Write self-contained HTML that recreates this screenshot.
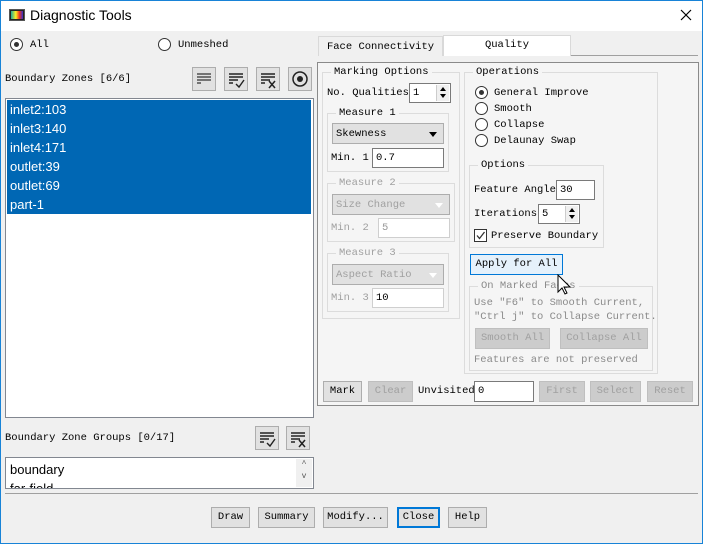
<!DOCTYPE html>
<html><head><meta charset="utf-8"><style>
*{box-sizing:border-box;margin:0;padding:0}
body{width:703px;height:544px;overflow:hidden;background:#fff;font-family:"Liberation Mono",monospace;font-size:10.5px;color:#000;position:relative}
.a{position:absolute;white-space:nowrap;line-height:16px}
.win{position:absolute;left:0;top:0;width:703px;height:544px;border:1px solid #1883d7}
.body{position:absolute;left:1px;top:31px;width:701px;height:512px;background:#f0f0f0}
.btn{position:absolute;border:1px solid #adadad;background:#e1e1e1;text-align:center;line-height:19px;font-size:10.5px}
.dis{color:#a0a0a0;background:#cccccc;border-color:#bfbfbf}
.inp{position:absolute;background:#fff;border:1px solid #7a7a7a;padding-left:3px;line-height:19px;font-size:10.5px}
.inpd{border-color:#cfcfcf;color:#999}
.grp{position:absolute;border:1px solid #dcdcdc}
.gl{position:absolute;top:-8px;left:8px;background:#f5f5f5;padding:0 3px;line-height:14px}
.rad{position:absolute;width:13px;height:13px;border:1px solid #333;border-radius:50%;background:#fff}
.rad.on::after{content:"";position:absolute;left:3px;top:3px;width:5px;height:5px;border-radius:50%;background:#333}
.tb{position:absolute;width:24px;height:24px;border:1px solid #adadad;background:#e1e1e1}
.dd{position:absolute;border:1px solid #adadad;background:#e1e1e1;padding-left:3px;line-height:20px}
.dd::after{content:"";position:absolute;right:6px;top:8px;border-left:4px solid transparent;border-right:4px solid transparent;border-top:5px solid #000}
.dd.dis::after{border-top-color:#fff}
.sp{position:absolute;background:#fff;border:1px solid #7a7a7a;padding-left:3px;line-height:19px}
.sp i{position:absolute;right:1px;top:1px;width:13px;height:16px;border-left:1px solid #ccc;background:#f0f0f0}
.sp i::before{content:"";position:absolute;left:3px;top:2px;border-left:3px solid transparent;border-right:3px solid transparent;border-bottom:4px solid #000}
.sp i::after{content:"";position:absolute;left:3px;top:9px;border-left:3px solid transparent;border-right:3px solid transparent;border-top:4px solid #000}
.row{position:absolute;left:3px;font-family:"Liberation Sans",sans-serif;font-size:13px;color:#fff;line-height:19px}
</style></head><body>
<div class="win"></div>
<div class="a" style="left:9px;top:9px;width:16px;height:12px;background:#222;border:1px solid #555"></div>
<div class="a" style="left:11px;top:11px;width:12px;height:8px;background:linear-gradient(90deg,#2a9 0,#fe2 40%,#e32 70%,#33c 100%)"></div>
<div class="a" style="left:30px;top:7px;font-family:'Liberation Sans',sans-serif;font-size:14px">Diagnostic Tools</div>
<svg class="a" style="left:680px;top:9px" width="12" height="12"><path d="M1 1L11 11M11 1L1 11" stroke="#000" stroke-width="1.2"/></svg>
<div class="body"></div>
<div class="rad on" style="left:10px;top:38px"></div><div class="a" style="left:30px;top:37px">All</div>
<div class="rad" style="left:158px;top:38px"></div><div class="a" style="left:178px;top:37px">Unmeshed</div>
<div class="a" style="left:5px;top:71px">Boundary Zones [6/6]</div>
<div class="tb" style="left:192px;top:67px"><svg width="22" height="22"><path d="M4 6h14M4 9h14M4 12h14M4 15h4" stroke="#333" stroke-width="1.3"/></svg></div>
<div class="tb" style="left:224px;top:67px"><svg width="22" height="22"><path d="M4 6h14M4 9h14M4 12h9M4 15h4M11 16l3 3 5-7" stroke="#222" stroke-width="1.4" fill="none"/></svg></div>
<div class="tb" style="left:256px;top:67px"><svg width="22" height="22"><path d="M4 6h14M4 9h14M4 12h9M4 15h4M12 13l6 7M18 13l-6 7" stroke="#222" stroke-width="1.5" fill="none"/></svg></div>
<div class="tb" style="left:288px;top:67px"><svg width="22" height="22"><circle cx="11" cy="11" r="7" stroke="#222" stroke-width="1.5" fill="none"/><circle cx="11" cy="11" r="3" fill="#222"/></svg></div>
<div class="a" style="left:5px;top:98px;width:309px;height:320px;background:#fff;border:1px solid #828790"></div>
<div class="a" style="left:7px;top:100px;width:304px;height:114px;background:#0067b4"></div>
<div class="row" style="left:10px;top:100px">inlet2:103</div>
<div class="row" style="left:10px;top:119px">inlet3:140</div>
<div class="row" style="left:10px;top:138px">inlet4:171</div>
<div class="row" style="left:10px;top:157px">outlet:39</div>
<div class="row" style="left:10px;top:176px">outlet:69</div>
<div class="row" style="left:10px;top:195px">part-1</div>
<div class="a" style="left:5px;top:430px">Boundary Zone Groups [0/17]</div>
<div class="tb" style="left:255px;top:426px"><svg width="22" height="22"><path d="M4 6h14M4 9h14M4 12h9M4 15h4M11 16l3 3 5-7" stroke="#222" stroke-width="1.4" fill="none"/></svg></div>
<div class="tb" style="left:286px;top:426px"><svg width="22" height="22"><path d="M4 6h14M4 9h14M4 12h9M4 15h4M12 13l6 7M18 13l-6 7" stroke="#222" stroke-width="1.5" fill="none"/></svg></div>
<div class="a" style="left:5px;top:457px;width:309px;height:32px;background:#fff;border:1px solid #828790;overflow:hidden">
<div class="a" style="left:4px;top:2px;font-family:'Liberation Sans',sans-serif;font-size:13px;line-height:19px">boundary<br>far-field</div>
<div class="a" style="right:1px;top:1px;width:16px;height:28px;background:#f0f0f0;font-size:8px;text-align:center;color:#555;line-height:12px">^<br>v</div></div>
<div class="a" style="left:5px;top:493px;width:693px;height:1px;background:#a0a0a0"></div>
<div class="btn" style="left:211px;top:507px;width:39px;height:21px">Draw</div>
<div class="btn" style="left:258px;top:507px;width:57px;height:21px">Summary</div>
<div class="btn" style="left:323px;top:507px;width:65px;height:21px">Modify...</div>
<div class="btn" style="left:397px;top:507px;width:43px;height:21px;border:2px solid #0078d7;line-height:17px">Close</div>
<div class="btn" style="left:448px;top:507px;width:39px;height:21px">Help</div>
<div class="a" style="left:318px;top:36px;width:125px;height:20px;border:1px solid #d9d9d9;border-bottom:none;background:#f0f0f0;text-align:center;line-height:20px">Face Connectivity</div>
<div class="a" style="left:443px;top:35px;width:128px;height:21px;border:1px solid #d9d9d9;border-bottom:none;background:#fff;text-align:center;line-height:19px">Quality</div>
<div class="a" style="left:571px;top:55px;width:127px;height:1px;background:#a0a0a0"></div>
<div class="a" style="left:317px;top:62px;width:382px;height:344px;border:1px solid #8a8a8a;background:#f5f5f5"></div>
<div class="grp" style="left:322px;top:72px;width:138px;height:247px"><span class="gl">Marking Options</span></div>
<div class="a" style="left:327px;top:85px">No. Qualities</div>
<div class="sp" style="left:409px;top:83px;width:42px;height:20px">1<i></i></div>
<div class="grp" style="left:327px;top:113px;width:122px;height:59px"><span class="gl">Measure 1</span></div>
<div class="dd" style="left:332px;top:123px;width:112px;height:21px">Skewness</div>
<div class="a" style="left:331px;top:150px">Min. 1</div>
<div class="inp" style="left:372px;top:148px;width:72px;height:20px">0.7</div>
<div class="grp" style="left:327px;top:183px;width:128px;height:59px"><span class="gl" style="color:#a0a0a0">Measure 2</span></div>
<div class="dd dis" style="left:332px;top:194px;width:118px;height:21px">Size Change</div>
<div class="a" style="left:331px;top:220px;color:#a0a0a0">Min. 2</div>
<div class="inp inpd" style="left:378px;top:218px;width:72px;height:20px">5</div>
<div class="grp" style="left:327px;top:253px;width:122px;height:59px"><span class="gl" style="color:#a0a0a0">Measure 3</span></div>
<div class="dd dis" style="left:332px;top:264px;width:112px;height:21px">Aspect Ratio</div>
<div class="a" style="left:331px;top:290px;color:#a0a0a0">Min. 3</div>
<div class="inp" style="left:372px;top:288px;width:72px;height:20px;border-color:#cfcfcf">10</div>
<div class="grp" style="left:464px;top:72px;width:194px;height:302px"><span class="gl">Operations</span></div>
<div class="rad on" style="left:475px;top:86px"></div><div class="a" style="left:494px;top:85px">General Improve</div>
<div class="rad" style="left:475px;top:102px"></div><div class="a" style="left:494px;top:101px">Smooth</div>
<div class="rad" style="left:475px;top:118px"></div><div class="a" style="left:494px;top:117px">Collapse</div>
<div class="rad" style="left:475px;top:134px"></div><div class="a" style="left:494px;top:133px">Delaunay Swap</div>
<div class="grp" style="left:469px;top:165px;width:135px;height:83px"><span class="gl">Options</span></div>
<div class="a" style="left:474px;top:182px">Feature Angle</div>
<div class="inp" style="left:556px;top:180px;width:39px;height:20px">30</div>
<div class="a" style="left:474px;top:206px">Iterations</div>
<div class="sp" style="left:538px;top:204px;width:42px;height:20px">5<i></i></div>
<div class="a" style="left:474px;top:229px;width:13px;height:13px;border:1px solid #333;background:#fff"><svg width="11" height="11" style="position:absolute;left:0;top:0"><path d="M2 5.5l2.5 3 5-6.5" stroke="#333" stroke-width="1.3" fill="none"/></svg></div>
<div class="a" style="left:491px;top:228px">Preserve Boundary</div>
<div class="btn" style="left:470px;top:254px;width:93px;height:21px;border-color:#0078d7;background:#e5f1fb">Apply for All</div>
<div class="grp" style="left:469px;top:286px;width:184px;height:85px"><span class="gl" style="color:#8a8a8a">On Marked Faces</span></div>
<div class="a" style="left:474px;top:296px;color:#8a8a8a;line-height:14px">Use "F6" to Smooth Current,<br>"Ctrl j" to Collapse Current.</div>
<div class="btn dis" style="left:475px;top:328px;width:75px;height:21px">Smooth All</div>
<div class="btn dis" style="left:560px;top:328px;width:88px;height:21px">Collapse All</div>
<div class="a" style="left:474px;top:352px;color:#8a8a8a">Features are not preserved</div>
<svg class="a" style="left:557px;top:274px" width="14" height="22"><path d="M1 1v17l4-4 3 6 2-1-3-6h6z" fill="#fff" stroke="#000" stroke-width="1"/></svg>
<div class="btn" style="left:323px;top:381px;width:39px;height:21px">Mark</div>
<div class="btn dis" style="left:368px;top:381px;width:45px;height:21px">Clear</div>
<div class="a" style="left:418px;top:383px">Unvisited</div>
<div class="inp" style="left:474px;top:381px;width:60px;height:21px">0</div>
<div class="btn dis" style="left:539px;top:381px;width:46px;height:21px">First</div>
<div class="btn dis" style="left:590px;top:381px;width:51px;height:21px">Select</div>
<div class="btn dis" style="left:647px;top:381px;width:46px;height:21px">Reset</div>
</body></html>
